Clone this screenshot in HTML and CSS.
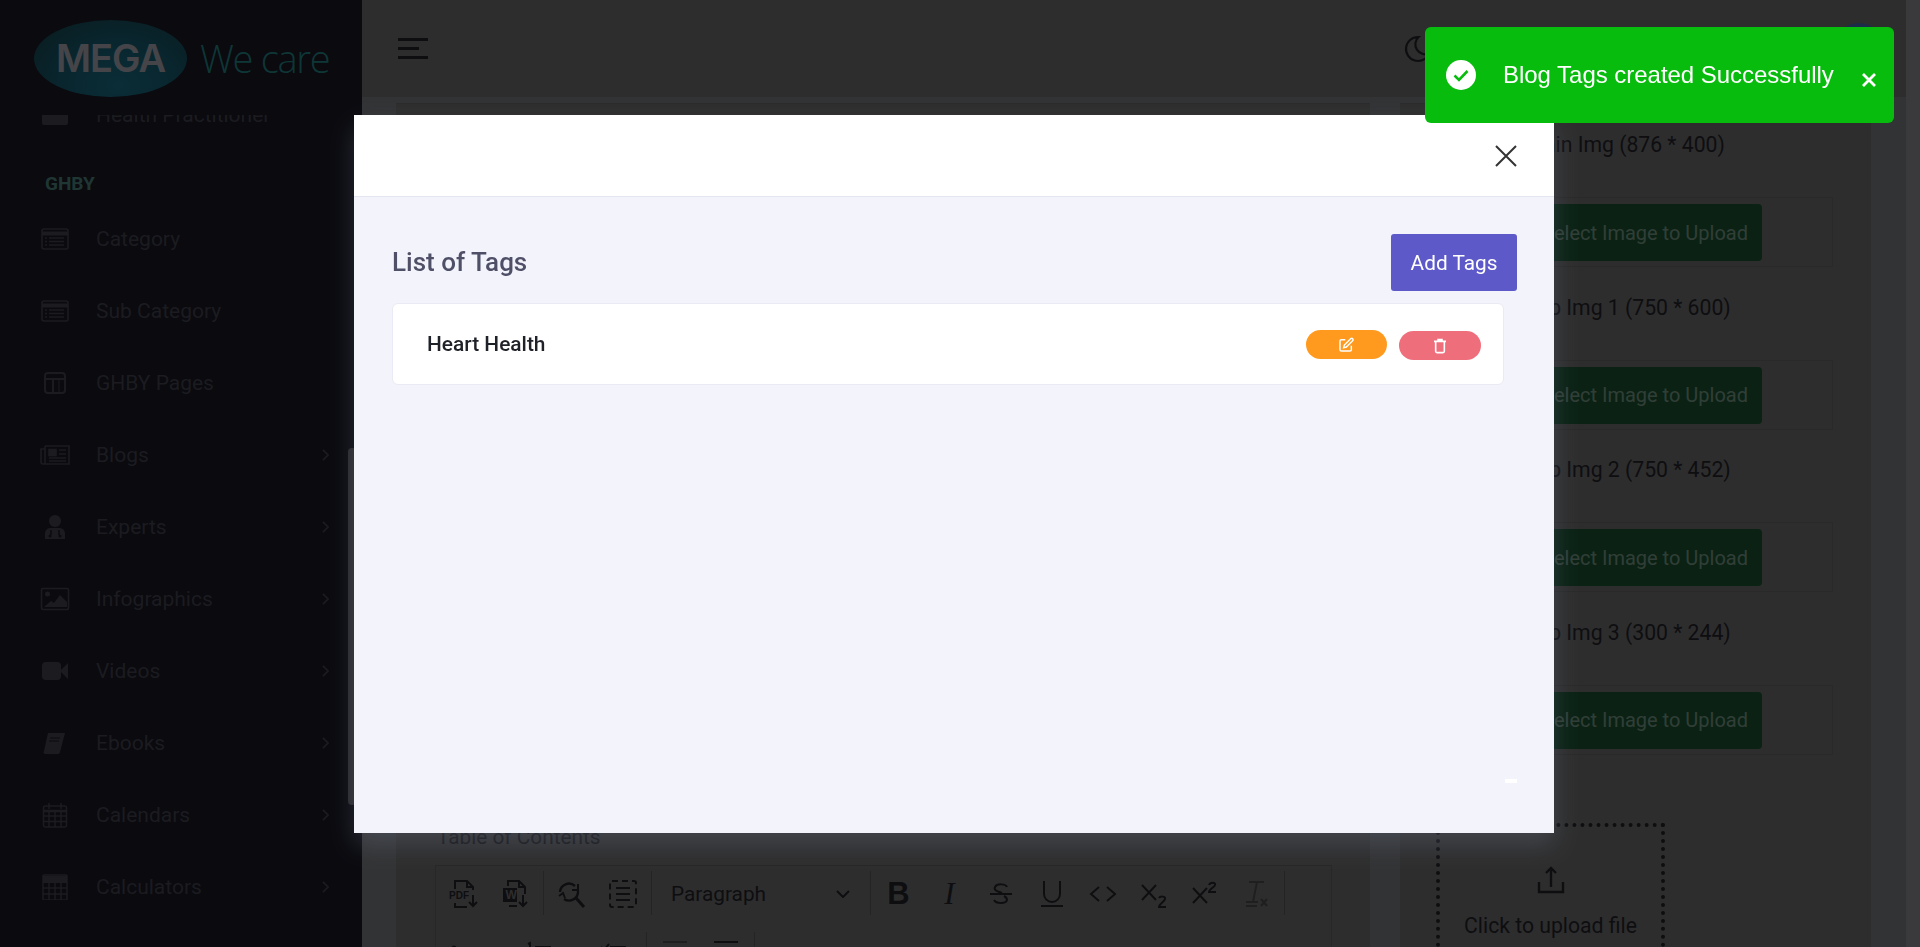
FILE: index.html
```html
<!DOCTYPE html>
<html lang="en">
<head>
  <meta charset="UTF-8" />
  <meta name="viewport" content="width=device-width, initial-scale=1.0" />
  <title>Add Blog</title>
  <link rel="stylesheet" href="styles.css">
</head>
<body>
  <aside class="sidebar">
    <div class="brand">
      <div class="brand-oval">MEGA</div>
      <div class="brand-tag">We care</div>
    </div>
    <nav class="menu">
      <a class="menu-item">
        <svg class="menu-icon" viewBox="0 0 30 26"><rect x="2" y="3" width="26" height="20" rx="2" fill="currentColor"/></svg>
        <span>Health Practitioner</span>
      </a>
      <div class="menu-title">GHBY</div>
      <a class="menu-item">
        <svg class="menu-icon" viewBox="0 0 30 26" fill="none" stroke="currentColor" stroke-width="1.6"><rect x="2" y="3" width="26" height="20" rx="2"/><path d="M2 7.5h26" stroke-width="4"/><path d="M9 12h15M9 15.5h15M9 19h15M5 12h2M5 15.5h2M5 19h2"/></svg>
        <span>Category</span>
      </a>
      <a class="menu-item">
        <svg class="menu-icon" viewBox="0 0 30 26" fill="none" stroke="currentColor" stroke-width="1.6"><rect x="2" y="3" width="26" height="20" rx="2"/><path d="M2 7.5h26" stroke-width="4"/><path d="M9 12h15M9 15.5h15M9 19h15M5 12h2M5 15.5h2M5 19h2"/></svg>
        <span>Sub Category</span>
      </a>
      <a class="menu-item">
        <svg class="menu-icon" viewBox="0 0 30 26" fill="none" stroke="currentColor" stroke-width="2"><rect x="5" y="3" width="20" height="20" rx="3"/><path d="M5 9h20M13 9v14"/><path d="M19 9v14" stroke-width="1"/></svg>
        <span>GHBY Pages</span>
      </a>
      <a class="menu-item">
        <svg class="menu-icon" viewBox="0 0 30 26" fill="none" stroke="currentColor" stroke-width="1.6"><path d="M5 4h24v18H3a2 2 0 0 1-2-2V7h4"/><path d="M5 4v18"/><rect x="9" y="7.5" width="7" height="6" fill="currentColor"/><path d="M19 8h7M19 12h7M9 16h17M9 19h17"/></svg>
        <span>Blogs</span>
        <svg class="menu-arrow" viewBox="0 0 8 14" fill="none" stroke="currentColor" stroke-width="2"><path d="M1 1l6 6-6 6"/></svg>
      </a>
      <a class="menu-item">
        <svg class="menu-icon" viewBox="0 0 30 26" fill="currentColor"><circle cx="15" cy="7" r="6"/><path d="M5 25v-6a6 6 0 0 1 6-5h8a6 6 0 0 1 6 5v6z"/><path d="M11 16v5M19 16v5" stroke="#222232" stroke-width="1.5"/><circle cx="10" cy="22" r="1.5" fill="#222232"/><circle cx="20" cy="22" r="1.5" fill="#222232"/></svg>
        <span>Experts</span>
        <svg class="menu-arrow" viewBox="0 0 8 14" fill="none" stroke="currentColor" stroke-width="2"><path d="M1 1l6 6-6 6"/></svg>
      </a>
      <a class="menu-item">
        <svg class="menu-icon" viewBox="0 0 30 26" fill="none" stroke="currentColor" stroke-width="1.6"><rect x="1.5" y="2.5" width="27" height="21" rx="1.5"/><circle cx="7.5" cy="8" r="2.5" fill="currentColor" stroke="none"/><path d="M4 21l7-6 3 2 6-8 7 7v5z" fill="currentColor" stroke="none"/></svg>
        <span>Infographics</span>
        <svg class="menu-arrow" viewBox="0 0 8 14" fill="none" stroke="currentColor" stroke-width="2"><path d="M1 1l6 6-6 6"/></svg>
      </a>
      <a class="menu-item">
        <svg class="menu-icon" viewBox="0 0 30 26" fill="currentColor"><rect x="2" y="4" width="19" height="18" rx="4"/><path d="M21 12l7-7v16l-7-7z"/></svg>
        <span>Videos</span>
        <svg class="menu-arrow" viewBox="0 0 8 14" fill="none" stroke="currentColor" stroke-width="2"><path d="M1 1l6 6-6 6"/></svg>
      </a>
      <a class="menu-item">
        <svg class="menu-icon" viewBox="0 0 30 26" fill="currentColor"><path d="M8 3h17l-5 19a2 2 0 0 1-2 2H5a2 2 0 0 1-1-3z"/><path d="M10 8h10M9 11h10" stroke="#222232" stroke-width="1.2"/></svg>
        <span>Ebooks</span>
        <svg class="menu-arrow" viewBox="0 0 8 14" fill="none" stroke="currentColor" stroke-width="2"><path d="M1 1l6 6-6 6"/></svg>
      </a>
      <a class="menu-item">
        <svg class="menu-icon" viewBox="0 0 30 26" fill="none" stroke="currentColor" stroke-width="1.5"><rect x="3.5" y="4" width="23" height="21" rx="2"/><path d="M3.5 9h23" stroke-width="2.5"/><path d="M3.5 14h23M3.5 19.5h23M9 9v16M15 9v16M21 9v16M9 1v6M21 1v6"/></svg>
        <span>Calendars</span>
        <svg class="menu-arrow" viewBox="0 0 8 14" fill="none" stroke="currentColor" stroke-width="2"><path d="M1 1l6 6-6 6"/></svg>
      </a>
      <a class="menu-item">
        <svg class="menu-icon" viewBox="0 0 30 26" fill="none" stroke="currentColor" stroke-width="1.5"><rect x="3" y="1" width="24" height="25" rx="1"/><path d="M3 5.5h24" stroke-width="7"/><path d="M3 14h24M3 20h24M9 9v17M15 9v17M21 9v17"/></svg>
        <span>Calculators</span>
        <svg class="menu-arrow" viewBox="0 0 8 14" fill="none" stroke="currentColor" stroke-width="2"><path d="M1 1l6 6-6 6"/></svg>
      </a>
    </nav>
    <div class="side-scroll"></div>
  </aside>

  <div class="page">
    <header class="topbar">
      <div class="burger"><i></i><i class="short"></i><i></i></div>
      <svg class="moon" viewBox="0 0 24 24" fill="none" stroke="currentColor" stroke-width="1.6"><path d="M12 3c.132 0 .263 0 .393 0a7.5 7.5 0 0 0 7.92 12.446a9 9 0 1 1-8.313-12.454z"/></svg>
      <div class="avatar"></div>
    </header>

    <main class="content">
      <section class="card card-main">
        <label class="field-label">Table of Contents</label>
        <div class="editor">
          <div class="tool-row">
            <span class="tool">
              <svg viewBox="0 0 32 32" fill="none" stroke="currentColor" stroke-width="2"><path d="M7 11V3h12l6 6v3M19 3v6h6M7 25v4h12"/><text x="1" y="21" class="tool-mini">PDF</text><path d="M25 17v11M21 24l4 4 4-4"/></svg>
            </span>
            <span class="tool">
              <svg viewBox="0 0 32 32" fill="none" stroke="currentColor" stroke-width="2"><path d="M9 8V3h11l6 6v7M20 3v6h6M10 28h8"/><rect x="4" y="10" width="14" height="14" fill="currentColor" stroke="none"/><text x="6.5" y="21" class="tool-mini tool-w">W</text><path d="M24 17v11M20 24l4 4 4-4"/></svg>
            </span>
            <span class="tool-sep"></span>
            <span class="tool">
              <svg viewBox="0 0 32 32" fill="none" stroke="currentColor" stroke-width="2.4"><path d="M4 14a9 9 0 0 1 15-6M22 13a9 9 0 0 1-14 8"/><path d="M16 12l6 0 0-6M3 18l4-3 2 5" stroke-width="2"/><path d="M20 20l8 9" stroke-width="3"/></svg>
            </span>
            <span class="tool">
              <svg viewBox="0 0 32 32" fill="none" stroke="currentColor" stroke-width="2"><rect x="3" y="3" width="26" height="26" rx="2" stroke-dasharray="6 4"/><path d="M9 10h14M9 16h14M9 22h14"/></svg>
            </span>
            <span class="tool-sep"></span>
            <span class="tool-select">
              <span>Paragraph</span>
              <svg viewBox="0 0 14 8" fill="none" stroke="currentColor" stroke-width="2"><path d="M1 1l6 6 6-6"/></svg>
            </span>
            <span class="tool-sep"></span>
            <span class="tool tool-text tool-b">B</span>
            <span class="tool tool-text tool-i">I</span>
            <span class="tool">
              <svg viewBox="0 0 32 32" fill="none" stroke="currentColor" stroke-width="2"><path d="M22 9c-1-3-10-4-12 0s5 5 7 6M9 22c2 4 12 4 13 0 0-2-1-3-3-4M5 16h22"/></svg>
            </span>
            <span class="tool">
              <svg viewBox="0 0 32 32" fill="none" stroke="currentColor" stroke-width="2"><path d="M8 3v13a8 8 0 0 0 16 0V3M5 28h22"/></svg>
            </span>
            <span class="tool">
              <svg viewBox="0 0 32 32" fill="none" stroke="currentColor" stroke-width="2"><path d="M12 9l-8 7 8 7M20 9l8 7-8 7"/></svg>
            </span>
            <span class="tool">
              <svg viewBox="0 0 32 32" fill="none" stroke="currentColor" stroke-width="2"><path d="M4 7l14 15M18 7L4 22M21 20c1-2 7-2 6 1 0 2-6 5-6 8h7"/></svg>
            </span>
            <span class="tool">
              <svg viewBox="0 0 32 32" fill="none" stroke="currentColor" stroke-width="2"><path d="M4 10l14 15M18 10L4 25M20 7c1-3 7-3 6 0 0 2-6 4-6 7h7"/></svg>
            </span>
            <span class="tool tool-off">
              <svg viewBox="0 0 32 32" fill="none" stroke="currentColor" stroke-width="2"><path d="M9 4h15M17 4l-4 20M6 24h12M6 28h11"/><path d="M21 21l6 7M27 21l-6 7" stroke-width="2.4"/></svg>
            </span>
            <span class="tool-sep"></span>
          </div>
          <div class="tool-row">
            <span class="tool tool-wide">
              <svg viewBox="0 0 32 32" fill="none" stroke="currentColor" stroke-width="2"><circle cx="6" cy="9" r="1.6" fill="currentColor"/><path d="M12 9h16M12 18h16"/></svg>
            </span>
            <span class="tool tool-wide">
              <svg viewBox="0 0 32 32" fill="none" stroke="currentColor" stroke-width="2"><path d="M5 5l2-1v8M12 8h16M12 18h16"/></svg>
            </span>
            <span class="tool tool-wide tool-last">
              <svg viewBox="0 0 32 32" fill="none" stroke="currentColor" stroke-width="2"><path d="M3 8l3 3 5-6M12 8h16M12 18h16"/></svg>
            </span>
            <span class="tool-sep"></span>
            <span class="tool">
              <svg class="tool-faint" viewBox="0 0 32 32" fill="none" stroke="currentColor" stroke-width="2"><path d="M4 3h24M12 10h16M4 17h24"/></svg>
            </span>
            <span class="tool">
              <svg viewBox="0 0 32 32" fill="none" stroke="currentColor" stroke-width="2"><path d="M4 3h24M12 10h16M4 17h24"/></svg>
            </span>
            <span class="tool-sep"></span>
            <span class="tool tool-wide tool-off">
              <svg viewBox="0 0 32 32" fill="none" stroke="currentColor" stroke-width="2"><path d="M12 9L4 16l8 7"/></svg>
            </span>
            <span class="tool tool-wide tool-off">
              <svg viewBox="0 0 32 32" fill="none" stroke="currentColor" stroke-width="2"><path d="M0 9l8 7-8 7"/></svg>
            </span>
          </div>
        </div>
      </section>

      <section class="card card-side">
        <div class="img-field">
          <label class="img-label">Main Img (876 * 400)</label>
          <div class="img-box"><button class="img-btn">Select Image to Upload</button></div>
        </div>
        <div class="img-field">
          <label class="img-label">Top Img 1 (750 * 600)</label>
          <div class="img-box"><button class="img-btn">Select Image to Upload</button></div>
        </div>
        <div class="img-field">
          <label class="img-label">Top Img 2 (750 * 452)</label>
          <div class="img-box"><button class="img-btn">Select Image to Upload</button></div>
        </div>
        <div class="img-field">
          <label class="img-label">Top Img 3 (300 * 244)</label>
          <div class="img-box"><button class="img-btn">Select Image to Upload</button></div>
        </div>
        <div class="dropzone">
          <svg viewBox="0 0 28 30" fill="none" stroke="currentColor" stroke-width="2.4"><path d="M14 22V3M9 8l5-5 5 5"/><path d="M2 17v10h24V17"/></svg>
          <div>Click to upload file</div>
        </div>
      </section>
    </main>
  </div>
  <div class="page-scroll"></div>

  <div class="backdrop"></div>

  <div class="modal">
    <div class="modal-head">
      <svg class="modal-close" viewBox="0 0 22 22" fill="none" stroke="currentColor" stroke-width="2"><path d="M1 1l20 20M21 1L1 21"/></svg>
    </div>
    <div class="modal-body">
      <div class="modal-top">
        <h2>List of Tags</h2>
        <button class="btn-add">Add Tags</button>
      </div>
      <div class="tag-row">
        <span class="tag-name">Heart Health</span>
        <button class="pill pill-edit">
          <svg viewBox="0 0 24 24" fill="none" stroke="currentColor" stroke-width="2.2"><path d="M11 4H5a2 2 0 0 0-2 2v13a2 2 0 0 0 2 2h13a2 2 0 0 0 2-2v-6"/><path d="M19 2.5a2.1 2.1 0 0 1 3 3L12.500 15 8.500 16l1-4z"/></svg>
        </button>
        <button class="pill pill-del">
          <svg viewBox="0 0 24 24" fill="none" stroke="currentColor" stroke-width="2.4"><path d="M3 5h18M9 5V2.500h6V5M5.500 5v15a2 2 0 0 0 2 2h9a2 2 0 0 0 2-2V5"/></svg>
        </button>
      </div>
      <span class="modal-dash"></span>
    </div>
  </div>

  <div class="toast">
    <svg class="toast-check" viewBox="0 0 30 30"><circle cx="15" cy="15" r="15" fill="#fff"/><path d="M8.5 15.500l4.500 4.500 8.500-9" fill="none" stroke="#08bc0d" stroke-width="2.600"/></svg>
    <span class="toast-text">Blog Tags created Successfully</span>
    <svg class="toast-close" viewBox="0 0 14 14" fill="none" stroke="#fff" stroke-width="2.800"><path d="M1 1l12 12M13 1L1 13"/></svg>
  </div>
</body>
</html>
```

FILE: styles.css
```css
body {
  margin: 0;
  height: 100vh;
  overflow: hidden;
  display: flex;
  font-family: Roboto, sans-serif;
  background-color: #a8aab0;
  color: #30303a;
}

/* sidebar */
.sidebar {
  position: relative;
  flex: 0 0 362px;
  background-color: #222232;
  color: #5c5c6c;
  overflow: hidden;
}
.brand {
  position: relative;
  z-index: 1;
  height: 115px;
  box-sizing: border-box;
  padding: 20px 0 0 34px;
  display: flex;
  background-color: #222232;
}
.brand-oval {
  width: 153px;
  height: 77px;
  border-radius: 50%;
  background: radial-gradient(ellipse at 55% 85%, #2498b8 0%, #20809c 45%, #1e6878 80%, #2c8088 100%);
  color: #e8e8f4;
  font-family: Inter, sans-serif;
  font-weight: 600;
  font-size: 38px;
  letter-spacing: -1px;
  line-height: 77px;
  text-align: center;
}
.brand-tag {
  margin-left: 13px;
  font-family: "Open Sans", sans-serif;
  font-weight: 300;
  font-size: 38px;
  letter-spacing: -1.3px;
  line-height: 77px;
  color: #32b4b4;
}
.menu {
  margin-top: -36px;
}
.menu-title {
  height: 52px;
  box-sizing: border-box;
  padding: 23px 0 0 45px;
  font-size: 19px;
  line-height: 20px;
  font-weight: 700;
  color: #68b4ac;
}
.menu-item {
  height: 72px;
  display: flex;
  align-items: center;
  padding: 0 33px 0 40px;
  font-size: 21px;
}
.menu-icon {
  width: 30px;
  height: 26px;
  margin-right: 26px;
}
.menu-arrow {
  width: 7px;
  height: 12px;
  margin-left: auto;
}
.side-scroll {
  position: absolute;
  left: 348px;
  top: 448px;
  width: 8px;
  height: 357px;
  border-radius: 4px;
  background-color: #8c8c99;
}

/* page */
.page {
  flex: 1;
  min-width: 0;
  display: flex;
  flex-direction: column;
}
.topbar {
  flex: 0 0 97px;
  display: flex;
  align-items: center;
  padding: 0 21px 0 36px;
  background-color: #969696;
  color: #30303a;
}
.burger {
  width: 30px;
  display: flex;
  flex-direction: column;
  gap: 6px;
}
.burger i {
  display: block;
  height: 3px;
  background-color: #30303a;
}
.burger .short {
  width: 21px;
}
.moon {
  width: 32px;
  height: 32px;
  margin-left: auto;
  margin-right: 399px;
}
.avatar {
  width: 52px;
  height: 52px;
  border-radius: 50%;
  background-color: #6090f0;
}
.content {
  flex: 1;
  min-height: 0;
  display: flex;
  gap: 30px;
  padding: 6px 35px 0 34px;
}
.card {
  background-color: #989898;
  border-top: 1px solid #8c8c8c;
  overflow: hidden;
}
.card-main {
  flex: 0 0 974px;
  box-sizing: border-box;
  padding: 721px 38px 0 39px;
}
.field-label {
  display: block;
  font-size: 20.8px;
  line-height: 24px;
  margin-left: 2px;
  margin-bottom: 16px;
  color: #44444e;
}
.editor {
  border: 1px solid #828282;
}
.tool-row {
  height: 61px;
  display: flex;
  padding: 0 2px;
  color: #30303a;
}
.tool {
  flex: 0 0 51px;
  height: 56px;
  display: flex;
  align-items: center;
  justify-content: center;
}
.tool svg {
  width: 32px;
  height: 32px;
}
.tool-wide {
  flex-basis: 75px;
  box-sizing: border-box;
  padding-left: 10px;
  justify-content: flex-start;
}
.tool-last {
  flex-basis: 55px;
}
.tool-off {
  color: #6a6a6a;
}
.tool-faint {
  color: #6a6a6a;
}
.tool-mini {
  font-family: "Liberation Sans", sans-serif;
  font-size: 10px;
  font-weight: 700;
  fill: currentColor;
  stroke: none;
}
.tool-w {
  fill: #989898;
  font-size: 12px;
}
.tool-text {
  font-size: 31px;
  font-family: "Liberation Sans", sans-serif;
}
.tool-b {
  font-weight: 700;
}
.tool-i {
  font-family: "Liberation Serif", serif;
  font-style: italic;
}
.tool-sep {
  flex: 0 0 1px;
  height: 44px;
  margin: 5px 2px 0 3px;
  background-color: #7a7a7a;
}
.tool-select {
  flex: 0 0 213px;
  box-sizing: border-box;
  height: 56px;
  padding: 0 17px;
  display: flex;
  align-items: center;
  justify-content: space-between;
  font-size: 20.8px;
}
.tool-select svg {
  width: 14px;
  height: 8px;
}
.card-side {
  flex: 1;
  box-sizing: border-box;
  padding: 29px 38px 0 37px;
}
.img-field {
  margin-bottom: 28.6px;
  padding-left: 76px;
}
.img-label {
  display: block;
  padding-left: 12.5px;
  font-size: 21.2px;
  line-height: 24px;
  margin-bottom: 40px;
}
.img-box {
  height: 70px;
  box-sizing: border-box;
  padding: 6px;
  border: 1px solid #8a8a8a;
}
.img-btn {
  width: 242px;
  height: 57px;
  padding: 0 0 0 8px;
  border: none;
  border-radius: 4px;
  background-color: #227044;
  color: #a4d0b8;
  font-family: Roboto, sans-serif;
  font-size: 20px;
}
.dropzone {
  width: 229px;
  height: 220px;
  box-sizing: border-box;
  margin: 68px 0 0 -1px;
  padding-top: 38px;
  border: 4px dotted #30303a;
  text-align: center;
  font-size: 21.2px;
}
.dropzone svg {
  display: block;
  width: 28px;
  height: 30px;
  margin: 0 auto 18px;
}
.page-scroll {
  flex: 0 0 14px;
  background-color: #c4c4c8;
}

/* overlay */
.backdrop {
  position: fixed;
  z-index: 5;
  inset: 0;
  background-color: rgba(0, 0, 0, 0.7);
}
.modal {
  position: fixed;
  z-index: 6;
  left: 354px;
  top: 115px;
  width: 1200px;
  height: 718px;
  display: flex;
  flex-direction: column;
  background-color: #f3f4fb;
  box-shadow: 0 12px 24px rgba(110, 118, 140, 0.32);
}
.modal-head {
  flex: 0 0 82px;
  display: flex;
  justify-content: flex-end;
  padding: 30px 37px 0 0;
  box-sizing: border-box;
  background-color: #fff;
  border-bottom: 1px solid #e4e6ef;
  color: #333;
}
.modal-close {
  width: 22px;
  height: 22px;
}
.modal-body {
  position: relative;
  flex: 1;
  padding: 37px 37px 0 38px;
}
.modal-top {
  display: flex;
  align-items: center;
  justify-content: space-between;
}
.modal-top h2 {
  margin: 0 0 2px;
  font-size: 26px;
  font-weight: 500;
  color: #4f5068;
}
.btn-add {
  width: 126px;
  height: 57px;
  border: none;
  border-radius: 3px;
  background-color: #5d59c9;
  color: #fff;
  font-family: Roboto, sans-serif;
  font-size: 20.8px;
}
.tag-row {
  height: 82px;
  box-sizing: border-box;
  margin: 12px 13px 0 0;
  padding: 0 22px 0 34px;
  display: flex;
  align-items: center;
  gap: 12px;
  background-color: #fff;
  border: 1px solid #e9eaf3;
  border-radius: 6px;
}
.tag-name {
  margin-right: auto;
  font-size: 20.9px;
  font-weight: 500;
  color: #1f2128;
}
.pill {
  width: 82px;
  height: 29px;
  padding: 0;
  border: none;
  border-radius: 15px;
  color: #fff;
  display: flex;
  align-items: center;
  justify-content: center;
}
.pill svg {
  width: 16px;
  height: 16px;
}
.pill-edit {
  width: 81px;
  background-color: #ff9a1f;
  margin-top: 1px;
}
.pill-edit svg {
  margin-right: 2px;
}
.pill-del {
  background-color: #ef6e7c;
  margin-top: 3px;
}
.modal-dash {
  position: absolute;
  left: 1151px;
  top: 582px;
  width: 12px;
  height: 4px;
  background-color: #fff;
}
.toast {
  position: fixed;
  z-index: 7;
  left: 1425px;
  top: 27px;
  width: 469px;
  height: 96px;
  box-sizing: border-box;
  padding: 0 18px 0 21px;
  display: flex;
  align-items: center;
  background-color: #08bc0d;
  border-radius: 6px;
  color: #fff;
  font-family: "Liberation Sans", sans-serif;
  font-size: 24px;
  letter-spacing: -0.03px;
}
.toast-check {
  width: 30px;
  height: 30px;
  margin-right: 27px;
}
.toast-close {
  width: 14px;
  height: 14px;
  margin-left: auto;
  margin-top: 10px;
}
```
